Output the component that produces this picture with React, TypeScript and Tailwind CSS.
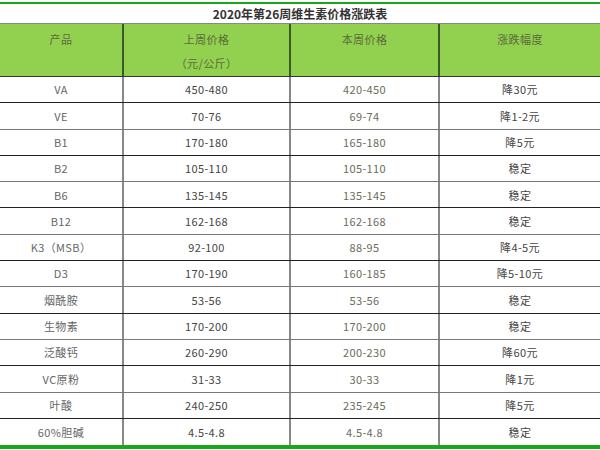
const rows: [string, string, string, string][] = [
  ["VA", "450-480", "420-450", "降30元"],
  ["VE", "70-76", "69-74", "降1-2元"],
  ["B1", "170-180", "165-180", "降5元"],
  ["B2", "105-110", "105-110", "稳定"],
  ["B6", "135-145", "135-145", "稳定"],
  ["B12", "162-168", "162-168", "稳定"],
  ["K3（MSB）", "92-100", "88-95", "降4-5元"],
  ["D3", "170-190", "160-185", "降5-10元"],
  ["烟酰胺", "53-56", "53-56", "稳定"],
  ["生物素", "170-200", "170-200", "稳定"],
  ["泛酸钙", "260-290", "200-230", "降60元"],
  ["VC原粉", "31-33", "30-33", "降1元"],
  ["叶酸", "240-250", "235-245", "降5元"],
  ["60%胆碱", "4.5-4.8", "4.5-4.8", "稳定"],
];

export default function App() {
  return (
    <div
      className="w-[600px] h-[450px] bg-white overflow-hidden pt-[2px] text-[11px] text-[#555] tracking-[0.4px]"
      style={{ fontFamily: '"Noto Sans CJK SC", "Noto Sans", sans-serif' }}
    >
      <div className="h-[2px] bg-[#1aa81a]" />
      <div className="h-[20px] flex items-center justify-center font-bold text-[12px] text-[#333] border-b border-[#888] tracking-normal">
        2020年第26周维生素价格涨跌表
      </div>
      <div className="grid grid-cols-[124px_167px_149px_1fr] bg-[#92d050] text-[#5b6b3b] border-b border-[#333]">
        <div className="h-[52px] border-r-2 border-[#3d5a2a] flex flex-col items-center">
          <span className="h-[26px] leading-[30px]">产品</span>
        </div>
        <div className="h-[52px] border-r-2 border-[#3d5a2a] flex flex-col items-center">
          <span className="h-[26px] leading-[30px]">上周价格</span>
          <span className="h-[26px] leading-[26px]">（元/公斤）</span>
        </div>
        <div className="h-[52px] border-r-2 border-[#3d5a2a] flex flex-col items-center">
          <span className="h-[26px] leading-[30px]">本周价格</span>
        </div>
        <div className="h-[52px] flex flex-col items-center">
          <span className="h-[26px] leading-[30px]">涨跌幅度</span>
        </div>
      </div>
      {rows.map((r, i) => (
        <div
          key={i}
          className={`grid grid-cols-[124px_167px_149px_1fr] h-[26.3px] ${
            i === rows.length - 1 ? "" : i % 2 === 0 ? "border-b border-[#222]" : "border-b border-[#777]"
          }`}
        >
          <div className="border-r-2 border-[#888] flex items-center justify-center text-[#666]">{r[0]}</div>
          <div className="border-r-2 border-[#888] flex items-center justify-center text-[#444]">{r[1]}</div>
          <div className="border-r-2 border-[#888] flex items-center justify-center text-[#6b6b5b]">{r[2]}</div>
          <div className="flex items-center justify-center text-[#444]">{r[3]}</div>
        </div>
      ))}
      <div className="h-[4px] bg-[#1aa81a]" />
    </div>
  );
}
